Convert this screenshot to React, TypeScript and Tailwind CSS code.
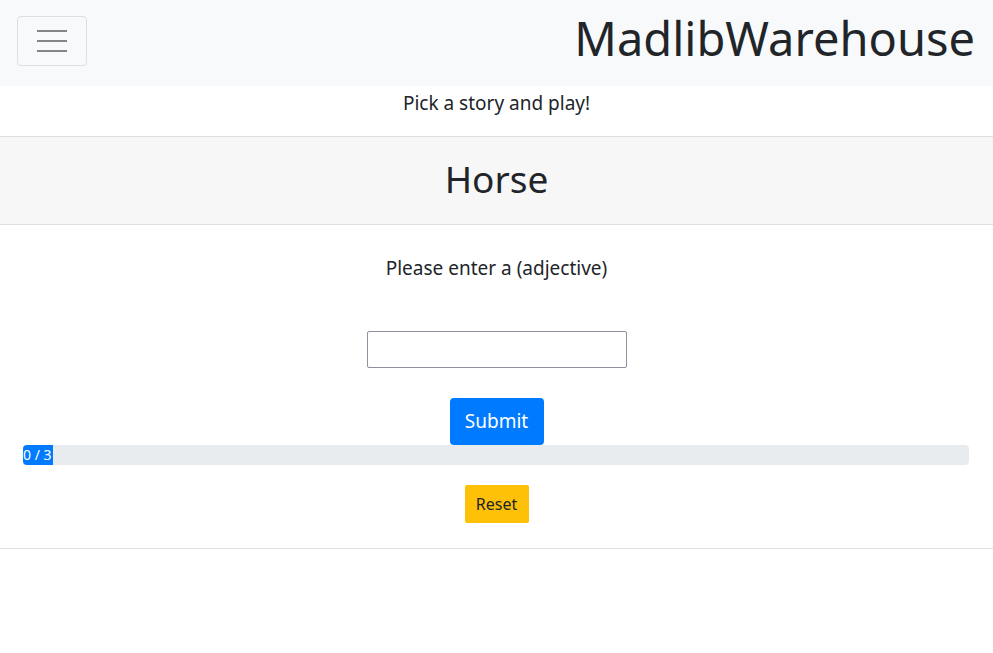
const App = () => {
  return (
    <div className="min-h-[653px] bg-white text-[#212529]" style={{ fontFamily: '"Noto Sans", sans-serif' }}>
      <nav className="flex h-[86px] items-start justify-between bg-[#f8f9fa] pl-[17px] pr-[18px] pt-[16px]">
        <button className="flex h-[50px] w-[70px] flex-col items-center justify-center gap-[8px] rounded-[4px] border border-[rgba(0,0,0,0.1)]">
          <span className="block h-[2px] w-[30px] bg-[#858687]"></span>
          <span className="block h-[2px] w-[30px] bg-[#858687]"></span>
          <span className="block h-[2px] w-[30px] bg-[#858687]"></span>
        </button>
        <span className="-mt-[3px] text-[47px] leading-[50px]">MadlibWarehouse</span>
      </nav>
      <p className="pt-[4px] text-center text-[19px] leading-[26px]">Pick a story and play!</p>
      <div className="mt-[20px] border-y border-[#dfdfdf]">
        <div className="flex h-[88px] items-center justify-center border-b border-[#dfdfdf] bg-[#f7f7f7] pb-[4px]">
          <h2 className="text-[37px] leading-none">Horse</h2>
        </div>
        <div className="flex flex-col items-center pb-[25px] pt-[30px]">
          <p className="text-[19px] leading-[26px]">Please enter a (adjective)</p>
          <input
            type="text"
            className="mt-[50px] h-[37px] w-[260px] rounded-[2px] border border-[#8f8f9d] bg-white"
          />
          <button className="mt-[30px] h-[47px] w-[94px] rounded-[4px] bg-[#007bff] text-[19px] text-white">
            Submit
          </button>
          <div className="ml-[23px] flex h-[20px] w-[946px] self-start overflow-hidden rounded-[4px] bg-[#e9ecef]">
            <div className="flex items-center bg-[#007bff] pr-[1px] text-[14px] leading-none text-white">
              0 / 3
            </div>
          </div>
          <button className="mt-[20px] h-[38px] w-[64px] rounded-[2px] bg-[#ffc107] text-[16px] text-[#212529]">
            Reset
          </button>
        </div>
      </div>
    </div>
  )
}

export default App
